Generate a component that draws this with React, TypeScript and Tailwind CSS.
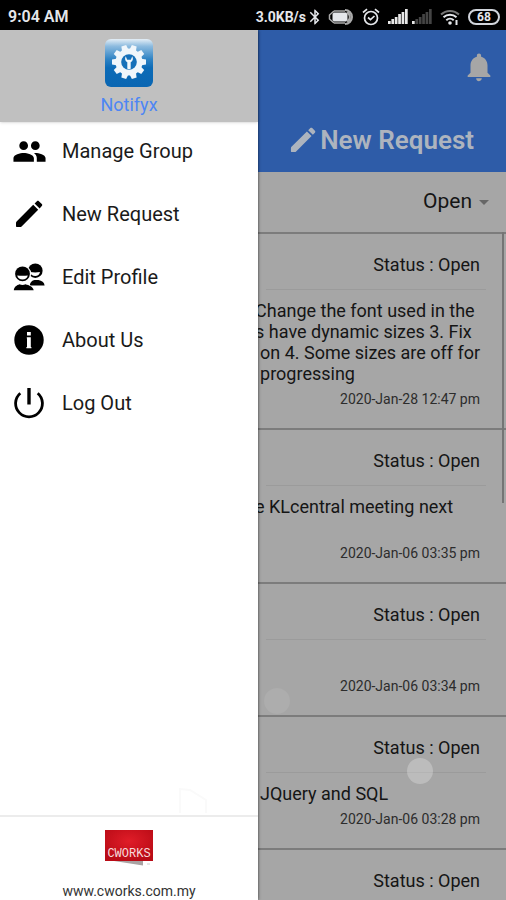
import React from "react";
import { MdArrowDropDown, MdBluetooth, MdGroup, MdNotifications } from "react-icons/md";

type Request = {
  id: number;
  lines: { text: string; cut?: boolean }[];
  date: string;
};

const requests: Request[] = [
  {
    id: 1,
    lines: [
      { text: "Change the font used in the", cut: true },
      { text: "s have dynamic sizes 3. Fix", cut: true },
      { text: "on 4. Some sizes are off for" },
      { text: "progressing" },
    ],
    date: "2020-Jan-28 12:47 pm",
  },
  {
    id: 2,
    lines: [{ text: "e KLcentral meeting next", cut: true }, { text: "" }],
    date: "2020-Jan-06 03:35 pm",
  },
  { id: 3, lines: [{ text: "" }], date: "2020-Jan-06 03:34 pm" },
  { id: 4, lines: [{ text: "JQuery and SQL" }], date: "2020-Jan-06 03:28 pm" },
  { id: 5, lines: [], date: "" },
];

const menu = [
  { label: "Manage Group", icon: <MdGroup className="size-[35px]" /> },
  { label: "New Request", icon: <PencilIcon className="size-7" /> },
  { label: "Edit Profile", icon: <ProfileIcon /> },
  { label: "About Us", icon: <InfoIcon /> },
  { label: "Log Out", icon: <PowerIcon /> },
];

function PencilIcon({ className }: { className: string }) {
  return (
    <svg viewBox="0 0 28 28" className={className} fill="currentColor">
      <path d="M18.200 4.800l5 5L6.600 26.400c-.4.400-.9.600-1.400.6H2c-.6 0-1-.4-1-1v-3.200c0-.5.200-1 .6-1.400z" />
      <path d="M19.600 3.400L21.900 1.200c.6-.6 1.400-.6 2 0l2.900 2.900c.6.6.6 1.400 0 2l-2.200 2.300z" />
    </svg>
  );
}

function ProfileIcon() {
  return (
    <svg viewBox="0 0 32 28" className="w-8 h-7" fill="currentColor">
      <circle cx="22.300" cy="7.700" r="7.300" />
      <path d="M17 9c3.500.6 7 .6 10 0-.5 2.600-2.200 4-4.700 4-2.800 0-4.700-1.400-5.300-4z" fill="#fff" />
      <path d="M17 22.500c-.3-3.400 2.500-5 4.500-5.500h4c3.300.8 5.700 2.200 6.100 5.500z" />
      <circle cx="9.500" cy="10.800" r="8.700" fill="#fff" />
      <circle cx="9.500" cy="10.800" r="7.400" />
      <path d="M4.200 12.400c3.600.5 7 .5 10.600 0-.5 2.500-2.600 4.100-5.300 4.100s-4.800-1.600-5.300-4.100z" fill="#fff" />
      <path d="M0 28c.4-4.700 3-6.500 6.500-7.500 2 1 4 1 6 0 4 1.200 8 2.800 8.600 7.500z" fill="#fff" />
      <path d="M.8 27.200c.4-3.600 3-5 5.700-6 2 1 4 1 6 0 3.700 1 7.600 2.400 8.200 6z" />
    </svg>
  );
}

function InfoIcon() {
  return (
    <svg viewBox="0 0 30 30" className="size-[30px]">
      <circle cx="15" cy="15" r="14.700" fill="currentColor" />
      <path d="M13 7h3.800v3.500H13zM12.800 12.300h4V22h.6v1.300h-5V22h.6v-8.500h-.2z" fill="#fff" />
    </svg>
  );
}

function PowerIcon() {
  return (
    <svg viewBox="0 0 30 32" className="w-[30px] h-8" fill="none" stroke="currentColor">
      <path d="M6.300 6.200a13.400 13.400 0 1 0 17.400 0" strokeWidth="2.800" />
      <path d="M15 1v16.500" strokeWidth="3.400" />
    </svg>
  );
}

function AppLogo() {
  return (
    <svg viewBox="0 0 48 48" className="size-12">
      <defs>
        <linearGradient id="logo-blue" x1="0" y1="0" x2="0" y2="1">
          <stop offset="0" stopColor="#e4eef6" />
          <stop offset=".15" stopColor="#8dbbdf" />
          <stop offset=".42" stopColor="#2f83c4" />
          <stop offset=".6" stopColor="#0c6bb7" />
          <stop offset="1" stopColor="#0a66b2" />
        </linearGradient>
      </defs>
      <rect width="48" height="48" rx="6" fill="url(#logo-blue)" />
      <g fill="#f0f6fb">
        {[18, 54, 90, 126, 162, 198, 234, 270, 306, 342].map((deg) => (
          <path key={deg} d="M20.500 12l1-6h5l1 6z" transform={`rotate(${deg} 24 23)`} />
        ))}
        <circle cx="24" cy="23" r="13.500" />
      </g>
      <circle cx="24" cy="23" r="7.800" fill="#1670b9" />
      <path
        d="M20.700 17.200c-1.300 2.600-.6 4.900 1.600 6v6.600c.9.600 2.500.6 3.400 0v-6.600c2.200-1.100 2.900-3.400 1.600-6l-1.500 3.500h-3.600z"
        fill="#f0f6fb"
      />
    </svg>
  );
}

function CworksLogo() {
  return (
    <svg viewBox="0 0 50 38" className="w-[50px] h-[38px] shrink-0">
      <defs>
        <radialGradient id="cworks-red" cx=".5" cy=".35" r=".65">
          <stop offset="0" stopColor="#e01d28" />
          <stop offset="1" stopColor="#b90b16" />
        </radialGradient>
      </defs>
      <path d="M10 32h29v4.500z" fill="#a9a3a3" />
      <path d="M43 35h3" stroke="#ccc" />
      <rect x="1" y="1" width="48" height="31" fill="url(#cworks-red)" />
      <text
        x="25"
        y="28"
        textAnchor="middle"
        fontSize="12"
        fill="#f6dcdc"
        fontFamily="'Liberation Mono', monospace"
      >
        CWORKS
      </text>
    </svg>
  );
}

function Signal({ level }: { level: number }) {
  return (
    <svg viewBox="0 0 20 15" className="w-5 h-[15px]">
      {[3, 5, 7, 10, 12, 15].map((h, i) => (
        <rect key={h} x={i * 3.4} y={15 - h} width="2.700" height={h} fill={i < level ? "#e8e8e8" : "#444"} />
      ))}
    </svg>
  );
}

function StatusBar() {
  return (
    <header className="h-[30px] shrink-0 bg-black text-gray-200 flex items-center pt-[3px] pl-2 pr-[6px]">
      <span className="text-base font-semibold">9:04 AM</span>
      <div className="ml-auto flex items-center gap-1">
        <span className="text-sm leading-4 font-bold">3.0KB/s</span>
        <MdBluetooth className="size-[18px] -ml-1" />
        <svg viewBox="0 0 26 16" className="w-[26px] h-4" fill="none" stroke="currentColor">
          <path d="M6 2h11M6 14h11M6 2L1.500 6v4L6 14" stroke="#aaa" strokeWidth="1.500" />
          <rect x="5" y="4" width="14" height="8" rx="1" fill="currentColor" />
          <path d="M17 1a7 7 0 0 1 0 14M19 3.500a5 5 0 0 1 0 9" stroke="#aaa" strokeWidth="2" />
        </svg>
        <svg viewBox="0 0 18 18" className="size-[18px] ml-1" fill="none" stroke="currentColor" strokeWidth="1.700">
          <circle cx="9" cy="10" r="6.500" />
          <path d="M1 4.500L5 1.200M17 4.500l-4-3.300M6 9.500l2.500 2.200L12.500 8" />
        </svg>
        <div className="flex gap-1 ml-1">
          <Signal level={6} />
          <Signal level={1} />
        </div>
        <svg viewBox="0 0 20 16" className="w-5 h-4 ml-1" fill="none" stroke="currentColor" strokeWidth="2">
          <path d="M1 5.500a13 13 0 0 1 18 0" stroke="#777" />
          <path d="M3.500 8.200a9.500 9.500 0 0 1 13 0M6.300 11.200a5.500 5.500 0 0 1 7.400 0" />
          <circle cx="10" cy="14" r="1.800" fill="currentColor" stroke="none" />
          <path d="M16.500 11v5" />
        </svg>
        <span className="ml-1 w-8 h-4 rounded-full border-2 border-gray-300 flex items-center justify-center text-xs leading-3 font-bold">
          68
        </span>
      </div>
    </header>
  );
}

function Drawer() {
  return (
    <aside className="w-[51%] shrink-0 flex flex-col bg-white text-black z-10 shadow-[0_0_3px_rgba(0,0,0,0.7)]">
      <div className="h-[92px] shrink-0 bg-[#c0c0c0] flex flex-col items-center pt-[9px] shadow-sm">
        <AppLogo />
        <h1 className="text-lg leading-6 mt-[6px] text-[#4d86f5]">Notifyx</h1>
      </div>
      <nav className="flex flex-col gap-[23px] pt-[9px]">
        {menu.map((item) => (
          <a key={item.label} href="#" className="h-10 flex items-center pl-[11px] text-xl text-[#1a1a1a]">
            <span className="w-9 mr-[15px] flex justify-center text-black">{item.icon}</span>
            {item.label}
          </a>
        ))}
      </nav>
      <svg viewBox="0 0 30 30" className="size-[30px] mt-auto ml-[178px]" fill="none" stroke="#fafafa" strokeWidth="2">
        <path d="M2 28V4l10 1 16 10v13" />
      </svg>
      <footer className="h-[85px] shrink-0 border-t-2 border-[#ececec] flex flex-col items-center pt-3">
        <CworksLogo />
        <a href="#" className="mt-4 text-sm leading-4 text-[#333]">
          www.cworks.com.my
        </a>
      </footer>
    </aside>
  );
}

function RequestCard({ request }: { request: Request }) {
  return (
    <article className="border-t-2 border-[#7c7c7c] pt-5 pb-5">
      <p className="text-lg leading-[21px] text-right pr-[26px]">Status : Open</p>
      <hr className="mt-[14px] mb-[10px] ml-2 mr-5 border-[#9b9b9b]" />
      {request.lines.map((line, i) => (
        <p
          key={i}
          className={`h-[21px] text-lg leading-[21px] whitespace-nowrap ${line.cut ? "-ml-[3px]" : "ml-[2px]"}`}
        >
          {line.text}
        </p>
      ))}
      <p className="mt-[6px] text-sm leading-[18px] text-right pr-[26px] text-[#2c2c2c]">{request.date}</p>
    </article>
  );
}

export default function App() {
  return (
    <div
      className="h-screen flex flex-col overflow-hidden bg-[#a6a6a6]"
      style={{ fontFamily: "Roboto, sans-serif" }}
    >
      <StatusBar />
      <div className="flex flex-1 min-h-0">
        <Drawer />
        <main className="relative flex-1 min-w-0 overflow-hidden text-[#151515]">
          <div className="h-[142px] bg-[#2e5ca8] text-[#adb4be] flex flex-col items-end justify-between pt-5 pb-4">
            <button aria-label="Notifications" className="mr-[10px]">
              <MdNotifications className="size-[34px] text-[#a6a6a6]" />
            </button>
            <button className="flex items-center text-[26px] leading-8 font-semibold mr-8">
              <PencilIcon className="size-[26px] mr-1" />
              New Request
            </button>
          </div>
          <div className="h-[60px] flex items-center justify-end pr-[10px]">
            <select
              aria-label="Status filter"
              defaultValue="Open"
              className="appearance-none bg-transparent text-[21px] text-right"
            >
              <option>Open</option>
              <option>Closed</option>
            </select>
            <MdArrowDropDown className="size-6 text-[#666]" />
          </div>
          <section>
            {requests.map((request) => (
              <RequestCard key={request.id} request={request} />
            ))}
          </section>
          {/* scroll thumb and touch ripples float over the list */}
          <div className="absolute right-[2px] top-[202px] w-[2px] h-[271px] bg-[#757575]" />
          <div className="absolute left-[6px] top-[658px] size-[26px] rounded-full bg-white/8" />
          <div className="absolute left-[149px] top-[728px] size-[26px] rounded-full bg-white/25" />
        </main>
      </div>
    </div>
  );
}
